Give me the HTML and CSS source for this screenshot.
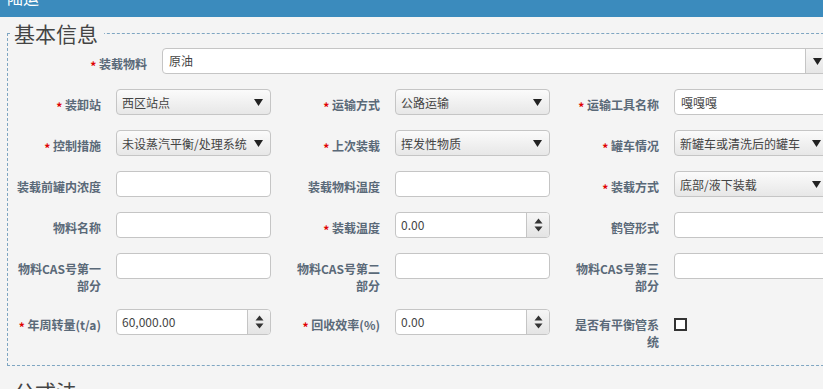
FILE: index.html
```html
<!DOCTYPE html>
<html>
  <head>
    <title>陆运</title>
    <meta charset="utf-8" />
    <link rel="stylesheet" href="styles.css">
  </head>

  <body>
    <div class="topbar"><span class="topbar_title">陆运</span></div>

    <fieldset class="group">
      <legend>基本信息</legend>

      <div class="form_row form_row_wide">
        <label class="lbl"><span class="req">*</span> 装载物料</label>
        <div class="field combo">
          <span class="combo_value">原油</span>
          <span class="combo_btn">
            <svg width="9" height="7" viewBox="0 0 9 7"><path d="M0 0H9L4.5 7Z" fill="#222" /></svg>
          </span>
        </div>
      </div>

      <div class="form_row">
        <label class="lbl"><span class="req">*</span> 装卸站</label>
        <div class="field select">
          <span>西区站点</span>
          <svg width="9" height="7" viewBox="0 0 9 7"><path d="M0 0H9L4.5 7Z" fill="#222" /></svg>
        </div>
        <label class="lbl"><span class="req">*</span> 运输方式</label>
        <div class="field select">
          <span>公路运输</span>
          <svg width="9" height="7" viewBox="0 0 9 7"><path d="M0 0H9L4.5 7Z" fill="#222" /></svg>
        </div>
        <label class="lbl"><span class="req">*</span> 运输工具名称</label>
        <input class="field text_input" type="text" value="嘎嘎嘎" />
      </div>

      <div class="form_row">
        <label class="lbl"><span class="req">*</span> 控制措施</label>
        <div class="field select">
          <span>未设蒸汽平衡/处理系统</span>
          <svg width="9" height="7" viewBox="0 0 9 7"><path d="M0 0H9L4.5 7Z" fill="#222" /></svg>
        </div>
        <label class="lbl"><span class="req">*</span> 上次装载</label>
        <div class="field select">
          <span>挥发性物质</span>
          <svg width="9" height="7" viewBox="0 0 9 7"><path d="M0 0H9L4.5 7Z" fill="#222" /></svg>
        </div>
        <label class="lbl"><span class="req">*</span> 罐车情况</label>
        <div class="field select">
          <span>新罐车或清洗后的罐车</span>
          <svg width="9" height="7" viewBox="0 0 9 7"><path d="M0 0H9L4.5 7Z" fill="#222" /></svg>
        </div>
      </div>

      <div class="form_row">
        <label class="lbl">装载前罐内浓度</label>
        <input class="field text_input" type="text" />
        <label class="lbl">装载物料温度</label>
        <input class="field text_input" type="text" />
        <label class="lbl"><span class="req">*</span> 装载方式</label>
        <div class="field select">
          <span>底部/液下装载</span>
          <svg width="9" height="7" viewBox="0 0 9 7"><path d="M0 0H9L4.5 7Z" fill="#222" /></svg>
        </div>
      </div>

      <div class="form_row">
        <label class="lbl">物料名称</label>
        <input class="field text_input" type="text" />
        <label class="lbl"><span class="req">*</span> 装载温度</label>
        <div class="field number">
          <span class="number_value">0.00</span>
          <span class="spin">
            <svg width="9" height="14" viewBox="0 0 9 14"><path d="M0.5 5.5H8.5L4.5 0.5Z M0.5 8.5H8.5L4.5 13.5Z" fill="#333" /></svg>
          </span>
        </div>
        <label class="lbl">鹤管形式</label>
        <input class="field text_input" type="text" />
      </div>

      <div class="form_row">
        <label class="lbl">物料CAS号第一部分</label>
        <input class="field text_input" type="text" />
        <label class="lbl">物料CAS号第二部分</label>
        <input class="field text_input" type="text" />
        <label class="lbl">物料CAS号第三部分</label>
        <input class="field text_input" type="text" />
      </div>

      <div class="form_row">
        <label class="lbl nowrap"><span class="req">*</span> 年周转量(t/a)</label>
        <div class="field number">
          <span class="number_value">60,000.00</span>
          <span class="spin">
            <svg width="9" height="14" viewBox="0 0 9 14"><path d="M0.5 5.5H8.5L4.5 0.5Z M0.5 8.5H8.5L4.5 13.5Z" fill="#333" /></svg>
          </span>
        </div>
        <label class="lbl"><span class="req">*</span> 回收效率(%)</label>
        <div class="field number">
          <span class="number_value">0.00</span>
          <span class="spin">
            <svg width="9" height="14" viewBox="0 0 9 14"><path d="M0.5 5.5H8.5L4.5 0.5Z M0.5 8.5H8.5L4.5 13.5Z" fill="#333" /></svg>
          </span>
        </div>
        <label class="lbl">是否有平衡管系统</label>
        <div><span class="check"></span></div>
      </div>
    </fieldset>

    <fieldset class="group group_next">
      <legend>公式法</legend>
    </fieldset>
  </body>
</html>
```

FILE: styles.css
```css
* {
  margin: 0;
  padding: 0;
}

body {
  background-color: #f4f4f4;
  font-family: "Noto Sans CJK SC", "Noto Sans", sans-serif;
  overflow: hidden;
}

.topbar {
  height: 17px;
  background-color: #3b8bbd;
  overflow: hidden;
}

.topbar_title {
  display: block;
  color: white;
  font-size: 16px;
  line-height: 16px;
  margin-top: -11px;
  padding-left: 7px;
}

.group {
  width: 860px;
  min-width: 0;
  margin: 5px 0 0 7px;
  padding: 4px 0 0 0;
  border: 1px dashed #7fa6c2;
}

.group legend {
  font-size: 21px;
  line-height: 22px;
  color: #444;
  margin-left: 4px;
  padding: 0 6px 0 2px;
}

.group_next {
  margin-top: 14px;
  height: 40px;
}

.form_row {
  display: grid;
  grid-template-columns: 86px 155px 94px 155px 94px 155px;
  column-gap: 15px;
  align-items: start;
  padding-left: 7px;
  margin-bottom: 15px;
}

.form_row_wide {
  grid-template-columns: 132px 667px;
}

.lbl {
  text-align: right;
  font-size: 12px;
  font-weight: bold;
  line-height: 17px;
  padding-top: 7px;
  color: #5a6978;
}

.nowrap {
  white-space: nowrap;
}

.req {
  color: #e00000;
  font-size: 12px;
  vertical-align: -2px;
}

.field {
  box-sizing: border-box;
  height: 26px;
  border: 1px solid #c5c5c5;
  border-radius: 4px;
  background-color: white;
  font-size: 12px;
  color: #444;
}

.text_input {
  width: 100%;
  padding: 0 6px;
  font-family: inherit;
  outline: none;
}

.select {
  display: flex;
  align-items: center;
  justify-content: space-between;
  padding: 0 7px 0 5px;
  background: linear-gradient(#fbfbfb, #e7e7e7);
  white-space: nowrap;
}

.combo {
  display: flex;
}

.combo_value {
  flex: 1;
  line-height: 24px;
  padding-left: 6px;
}

.combo_btn {
  width: 22px;
  display: flex;
  align-items: center;
  justify-content: center;
  border-left: 1px solid #c5c5c5;
  background: linear-gradient(#f6f6f6, #e6e6e6);
  border-radius: 0 3px 3px 0;
}

.number {
  display: flex;
}

.number_value {
  flex: 1;
  line-height: 24px;
  padding-left: 5px;
}

.spin {
  width: 22px;
  display: flex;
  align-items: center;
  justify-content: center;
  border-left: 1px solid #c5c5c5;
  background: linear-gradient(#f6f6f6, #e4e4e4);
  border-radius: 0 3px 3px 0;
}

.check {
  display: block;
  box-sizing: border-box;
  width: 13px;
  height: 13px;
  margin-top: 9px;
  border: 2px solid #333;
  background-color: white;
}
```
